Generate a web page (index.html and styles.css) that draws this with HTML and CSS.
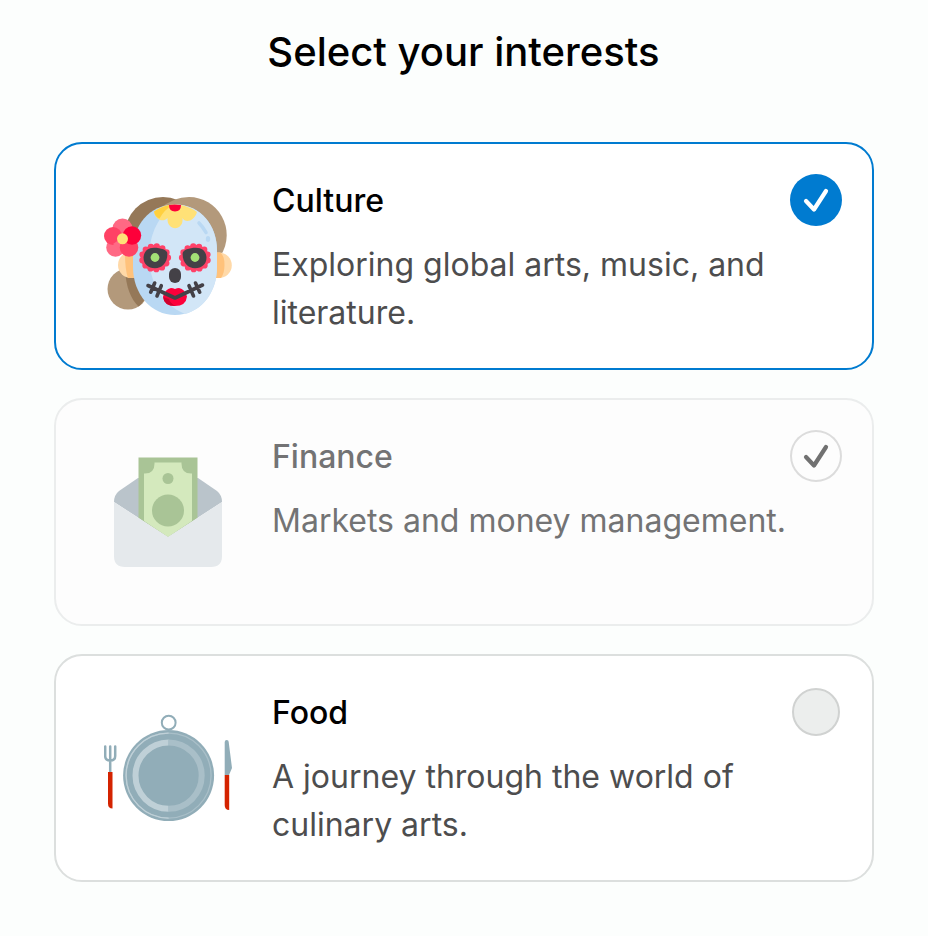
FILE: index.html
```html
<!DOCTYPE html>
<html lang="en">
<head>
<meta charset="utf-8">
<title>Select your interests</title>
<link rel="stylesheet" href="styles.css">
</head>
<body>
<main class="page">
  <h1 class="heading">Select your interests</h1>
  <div class="options">
    <section class="card card-selected">
      <svg class="art" viewBox="104 192 128 128" aria-hidden="true">
        <circle cx="128" cy="289" r="20.5" fill="#b3997b"/>
        <path d="M125 269C126 288 131 299 138.500 306.500Q145 302 148.500 289Q145 269 125 269Z" fill="#957858"/>
        <circle cx="163" cy="235.500" r="38.500" fill="#957858"/>
        <path d="M175 199.500Q181 197 189 197A38 38 0 0 1 221 255L140 254Q134 218 175 199.500Z" fill="#b3997b"/>
        <path d="M136 252h-5a13 13 0 0 0 0 26h8z" fill="#ffd9a8"/>
        <path d="M125 238h12v40h-9q-3-8-3-25z" fill="#ffc27b"/>
        <path d="M214 252.500h5a12.800 12.800 0 0 1 0 25.600h-8z" fill="#ffd9a8"/>
        <path d="M214 252.500h6q4.500 3 4.500 12t-3.500 13.500h-8z" fill="#ffc27b"/>
        <path d="M175 204.500C149 204.500 133 226 133 250V267C133 294 151 315 175 315S217 294 217 267V250C217 226 201 204.500 175 204.500Z" fill="#b9d8f3"/>
        <path d="M175 205C142 223 136 293 185 314C204 309 217 291 217 267V250C217 226 201 204.500 175 204.500Z" fill="#d2e6f7"/>
        <path d="M199 223q4 4 7 9.500" fill="none" stroke="#b9d8f3" stroke-width="3.600" stroke-linecap="round"/>
        <ellipse cx="208" cy="239" rx="2.200" ry="3" fill="#b9d8f3"/>
        <path d="M154 211.500Q163 204.500 175 204.500T197 212C194 222 185 223 182.500 218C184 231.500 166.500 231.500 167.500 218C163 223 155 219.500 154 211.500Z" fill="#ffe177"/>
        <path d="M154 211.500Q163 205.500 173 204.500Q164 210 159.500 218.500Q155 217 154 211.500Z" fill="#ffd03f"/>
        <path d="M169 205q6-1 12 0q0 6.500-6 6.500t-6-6.500z" fill="#fd003a"/>
        <g id="eye">
          <ellipse cx="155" cy="257.700" rx="14.300" ry="12.800" fill="#ff4168"/>
          <ellipse cx="155" cy="257.700" rx="13" ry="11.500" fill="none" stroke="#ff4168" stroke-width="6.200" stroke-linecap="round" stroke-dasharray="0 5.920"/>
          <path d="M143.500 257.500C144 251 148 247.700 154 247.700C161 247.700 167 250 167.300 253C168 262 162 268.300 155 268.300C148 268.300 143.500 264 143.500 257.500Z" fill="#444147"/>
          <circle cx="155" cy="257.500" r="4.400" fill="#a4e276"/>
        </g>
        <use href="#eye" transform="translate(350 0) scale(-1 1)"/>
        <rect x="169" y="268" width="12" height="15" rx="6" fill="#444147"/>
        <path d="M163 296.500Q165 289 171 288Q173 288 175 289Q177 288 179 288Q185 289 187 296.500Q186 306 175 306T163 296.500Z" fill="#fd003a"/>
        <path d="M163 297q1 9 12.500 9q-5.500-3-6.500-7z" fill="#cf002d"/>
        <path d="M148 285.500L175 298L202.500 285M154.700 283l-4 9.200M161.300 285.700l-4.300 10.300M195.500 283l4.200 9.200M189 285.700l4.500 10.300" fill="none" stroke="#444147" stroke-width="3.600" stroke-linecap="round" stroke-linejoin="round"/>
        <circle cx="122.500" cy="228.500" r="10" fill="#ff6984"/>
        <circle cx="115.500" cy="247.500" r="9.300" fill="#ff6984"/>
        <circle cx="113" cy="236" r="9" fill="#ff4265"/>
        <path d="M113 244l10-7-3 13z" fill="#ff6984"/>
        <circle cx="129" cy="247.500" r="9.300" fill="#ff4265"/>
        <circle cx="132" cy="235.500" r="9.200" fill="#fd003a"/>
        <circle cx="122.500" cy="238.800" r="5.500" fill="#ffe177"/>
      </svg>
      <div class="copy">
        <h2 class="title">Culture</h2>
        <p class="description">Exploring global arts, music, and literature.</p>
      </div>
      <span class="mark mark-on"><svg class="check" viewBox="0 0 52 52"><path d="M16 27l8 8.500L36 17"/></svg></span>
    </section>

    <section class="card card-disabled">
      <svg class="art" viewBox="104 448 128 128" aria-hidden="true">
        <path d="M138 478L119 491Q114 495 114 502L168 537L222 502Q222 495 217 491L198 478Z" fill="#bac4cb"/>
        <path d="M138.500 457.500H197.500V518L168 537L138.500 518Z" fill="#a9c496"/>
        <path d="M144 473.500Q155 474 154.500 462.500H181.500Q181 474 192 473.500V521L168 537L144 521Z" fill="#d4e9bd"/>
        <circle cx="168" cy="478.500" r="5.500" fill="#a9c496"/>
        <circle cx="168" cy="510.500" r="16" fill="#a9c496"/>
        <path d="M114 502L168 537L222 502V556Q222 567 211 567H125Q114 567 114 556Z" fill="#e5e9ec"/>
      </svg>
      <div class="copy">
        <h2 class="title">Finance</h2>
        <p class="description">Markets and money management.</p>
      </div>
      <span class="mark mark-muted"><svg class="check" viewBox="0 0 52 52"><path d="M16 27l8 8.500L36 17"/></svg></span>
    </section>

    <section class="card">
      <svg class="art" viewBox="104 704 128 128" aria-hidden="true">
        <circle cx="168.700" cy="722.700" r="6.900" fill="none" stroke="#91adb8" stroke-width="2"/>
        <circle cx="168.600" cy="775.600" r="45.500" fill="#91adb8"/>
        <circle cx="168.600" cy="775.600" r="42.500" fill="none" stroke="#a9bfc8" stroke-width="1.300"/>
        <path d="M168.600 733.100A42.500 42.500 0 0 0 168.600 818.100" fill="none" stroke="#bfd0d7" stroke-width="1.300"/>
        <path d="M168.600 742.500A33.100 33.100 0 0 0 168.600 808.700" fill="none" stroke="#bfd0d7" stroke-width="6"/>
        <path d="M168.600 742.500A33.100 33.100 0 0 1 168.600 808.700" fill="none" stroke="#a9bfc8" stroke-width="6"/>
        <path d="M105.200 746.500V756Q105.200 760.500 110.200 760.500T115.200 756V746.500M110.200 746.500V772" fill="none" stroke="#91adb8" stroke-width="2.500" stroke-linecap="round"/>
        <path d="M108 772h4.500v36.500q-4.500 0-4.500-5z" fill="#d42300"/>
        <path d="M224.700 775V742q0-2 2-2t2 2L232 768l-3 7z" fill="#91adb8"/>
        <path d="M224.700 775h4.500v35q-4.500 0-4.500-5z" fill="#d42300"/>
      </svg>
      <div class="copy">
        <h2 class="title">Food</h2>
        <p class="description">A journey through the world of culinary arts.</p>
      </div>
      <span class="mark mark-off"></span>
    </section>
  </div>
</main>
</body>
</html>
```

FILE: styles.css
```css
* {
  box-sizing: border-box;
}

body {
  margin: 0;
  background: #fcfefd;
  color: #000;
  font-family: Inter, "Liberation Sans", sans-serif;
}

.page {
  padding: 22px 54px 54px;
}

.heading {
  margin: 0 0 60px;
  padding-right: 1px;
  font-size: 40px;
  font-weight: 500;
  line-height: 60px;
  text-align: center;
}

.options {
  display: grid;
  gap: 28px;
}

.card {
  position: relative;
  display: flex;
  gap: 40px;
  height: 228px;
  padding: 32px 80px 32px 48px;
  border: 2px solid #dcdfde;
  border-radius: 28px;
  background: #fff;
}

.card-selected {
  border-color: #007bd0;
}

.card-disabled {
  border-color: #ebeded;
  background: #fdfdfd;
}

.art {
  flex: none;
  align-self: center;
  width: 128px;
  height: 128px;
}

.copy {
  padding-top: 1px;
}

.title,
.description {
  margin: 0;
  font-size: 32px;
  line-height: 48px;
}

.title {
  margin-bottom: 16px;
  font-weight: 500;
}

.description {
  color: #4d4d4e;
}

.card-disabled .title,
.card-disabled .description {
  color: #737374;
}

.mark {
  position: absolute;
  top: 30px;
  right: 30px;
  width: 52px;
  height: 52px;
  border-radius: 50%;
}

.check {
  position: absolute;
  inset: 0;
  width: 52px;
  height: 52px;
  fill: none;
  stroke: #fff;
  stroke-width: 4.2;
  stroke-linecap: round;
  stroke-linejoin: round;
}

.mark-on {
  background: #007bd0;
}

.mark-muted {
  box-shadow: inset 0 0 0 2px #dcdcdc;
}

.mark-muted .check {
  stroke: #717171;
}

.mark-off {
  top: 32px;
  right: 32px;
  width: 48px;
  height: 48px;
  border: 2px solid #d0d2d1;
  background: #eceeed;
}
```
